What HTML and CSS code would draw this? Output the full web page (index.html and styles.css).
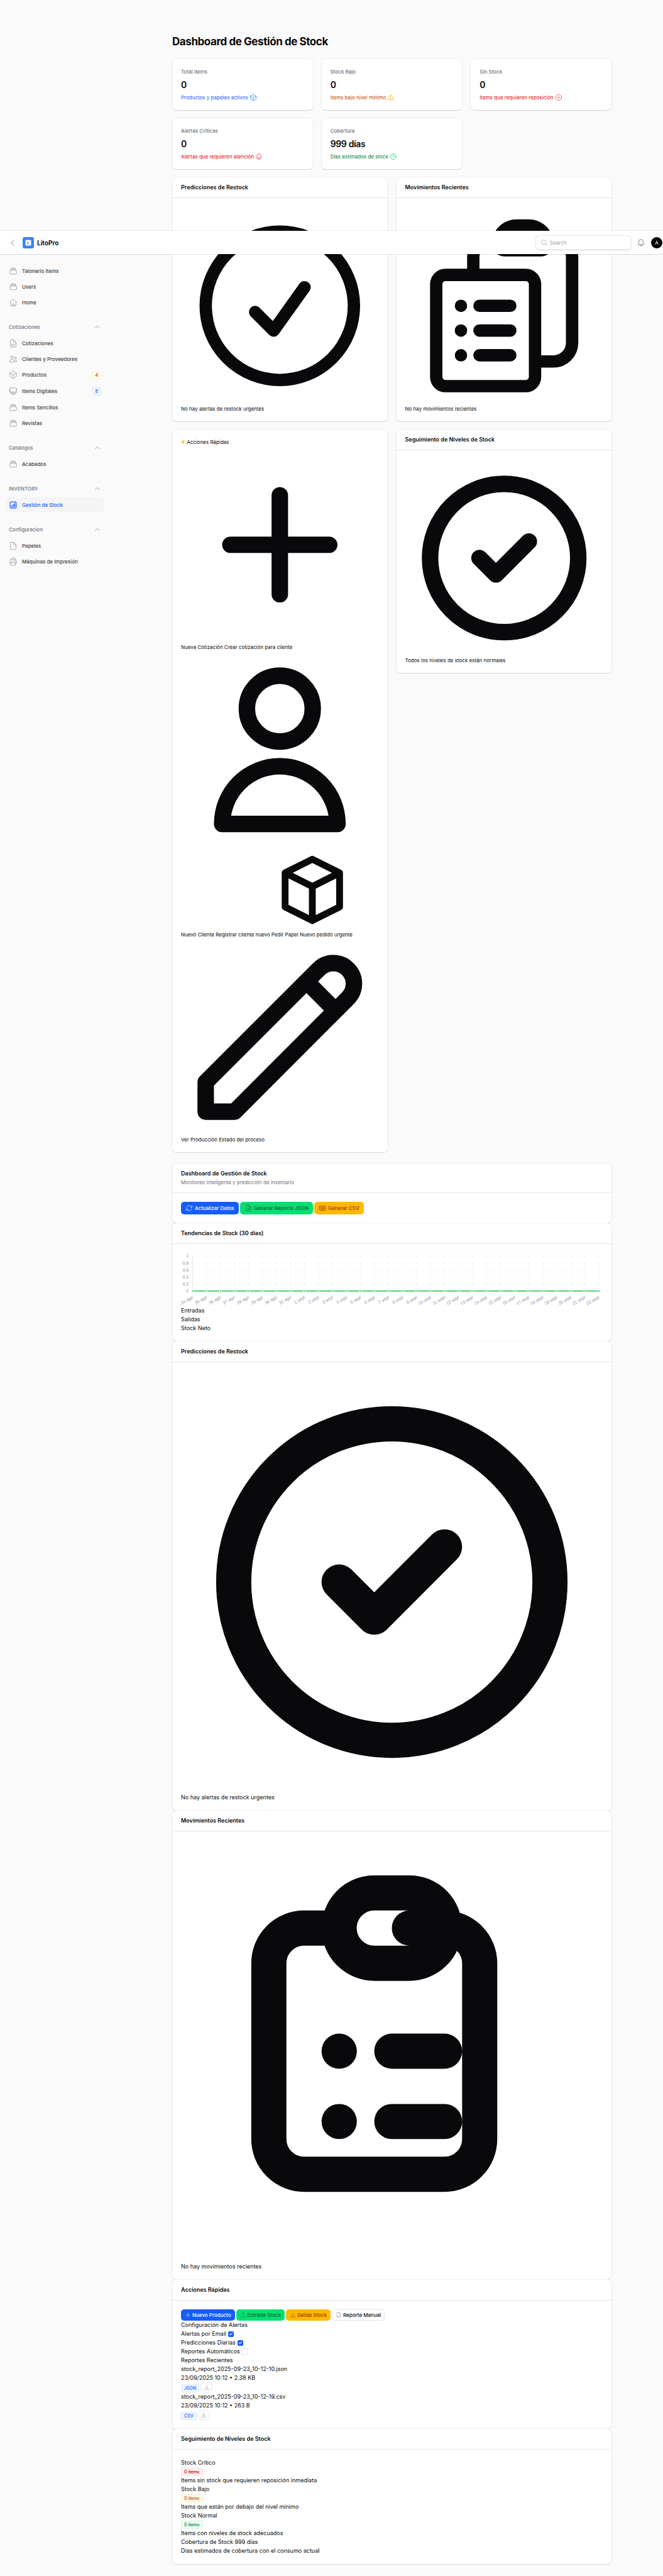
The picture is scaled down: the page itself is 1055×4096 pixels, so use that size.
FILE: index.html
```html
<!DOCTYPE html>
<html lang="es">
<head>
<meta charset="utf-8">
<meta name="viewport" content="width=device-width, initial-scale=1">
<title>Dashboard de Gestión de Stock - LitoPro</title>
<link rel="stylesheet" href="styles.css">
</head>
<body>
<svg class="sprite" aria-hidden="true">
  <symbol id="stack" viewBox="0 0 24 24"><path d="M6 6.878V6a2.25 2.25 0 0 1 2.25-2.25h7.5A2.25 2.25 0 0 1 18 6v.878m-12 0c.235-.083.487-.128.75-.128h10.5c.263 0 .515.045.75.128m-12 0A2.25 2.25 0 0 0 4.5 9v.878m13.5-3A2.25 2.25 0 0 1 19.5 9v.878m0 0a2.246 2.246 0 0 0-.75-.128H5.25c-.263 0-.515.045-.75.128m15 0A2.25 2.25 0 0 1 21 12v6a2.25 2.25 0 0 1-2.25 2.25H5.25A2.25 2.25 0 0 1 3 18v-6c0-.98.626-1.813 1.5-2.122"/></symbol>
  <symbol id="home" viewBox="0 0 24 24"><path d="m2.25 12 8.954-8.955c.44-.439 1.152-.439 1.591 0L21.75 12M4.5 9.75v10.125c0 .621.504 1.125 1.125 1.125H9.75v-4.875c0-.621.504-1.125 1.125-1.125h2.25c.621 0 1.125.504 1.125 1.125V21h4.125c.621 0 1.125-.504 1.125-1.125V9.75M8.25 21h8.25"/></symbol>
  <symbol id="doc-text" viewBox="0 0 24 24"><path d="M19.5 14.25v-2.625a3.375 3.375 0 0 0-3.375-3.375h-1.5A1.125 1.125 0 0 1 13.5 7.125v-1.5a3.375 3.375 0 0 0-3.375-3.375H8.25m0 12.75h7.5m-7.5 3H12M10.5 2.25H5.625c-.621 0-1.125.504-1.125 1.125v17.25c0 .621.504 1.125 1.125 1.125h12.75c.621 0 1.125-.504 1.125-1.125V11.25a9 9 0 0 0-9-9Z"/></symbol>
  <symbol id="doc" viewBox="0 0 24 24"><path d="M19.5 14.25v-2.625a3.375 3.375 0 0 0-3.375-3.375h-1.5A1.125 1.125 0 0 1 13.5 7.125v-1.5a3.375 3.375 0 0 0-3.375-3.375H8.25m2.25 0H5.625c-.621 0-1.125.504-1.125 1.125v17.25c0 .621.504 1.125 1.125 1.125h12.75c.621 0 1.125-.504 1.125-1.125V11.25a9 9 0 0 0-9-9Z"/></symbol>
  <symbol id="doc-down" viewBox="0 0 24 24"><path d="M19.5 14.25v-2.625a3.375 3.375 0 0 0-3.375-3.375h-1.5A1.125 1.125 0 0 1 13.5 7.125v-1.5a3.375 3.375 0 0 0-3.375-3.375H8.25m.75 12 3 3m0 0 3-3m-3 3v-6m-1.5-9H5.625c-.621 0-1.125.504-1.125 1.125v17.25c0 .621.504 1.125 1.125 1.125h12.75c.621 0 1.125-.504 1.125-1.125V11.25a9 9 0 0 0-9-9Z"/></symbol>
  <symbol id="users" viewBox="0 0 24 24"><path d="M15 19.128a9.38 9.38 0 0 0 2.625.372 9.337 9.337 0 0 0 4.121-.952 4.125 4.125 0 0 0-7.533-2.493M15 19.128v-.003c0-1.113-.285-2.16-.786-3.07M15 19.128v.106A12.318 12.318 0 0 1 8.624 21c-2.331 0-4.512-.645-6.374-1.766l-.001-.109a6.375 6.375 0 0 1 11.964-3.07M12 6.375a3.375 3.375 0 1 1-6.75 0 3.375 3.375 0 0 1 6.75 0Zm8.25 2.25a2.625 2.625 0 1 1-5.25 0 2.625 2.625 0 0 1 5.25 0Z"/></symbol>
  <symbol id="cube" viewBox="0 0 24 24"><path d="m21 7.5-9-5.25L3 7.5m18 0-9 5.25m9-5.25v9l-9 5.25M3 7.5l9 5.25M3 7.5v9l9 5.25m0-9v9"/></symbol>
  <symbol id="desktop" viewBox="0 0 24 24"><path d="M9 17.25v1.007a3 3 0 0 1-.879 2.122L7.5 21h9l-.621-.621A3 3 0 0 1 15 18.257V17.25m6-12V15a2.25 2.25 0 0 1-2.25 2.25H5.25A2.25 2.25 0 0 1 3 15V5.25m18 0A2.25 2.25 0 0 0 18.75 3H5.25A2.25 2.25 0 0 0 3 5.25m18 0V12a2.25 2.25 0 0 1-2.25 2.25H5.25A2.25 2.25 0 0 1 3 12V5.25"/></symbol>
  <symbol id="chart-square" viewBox="0 0 24 24"><path d="M7.5 14.25v2.25m3-4.5v4.5m3-6.75v6.75m3-9v9M6 20.25h12A2.25 2.25 0 0 0 20.25 18V6A2.25 2.25 0 0 0 18 3.75H6A2.25 2.25 0 0 0 3.75 6v12A2.25 2.25 0 0 0 6 20.25Z"/></symbol>
  <symbol id="printer" viewBox="0 0 24 24"><path d="M6.72 13.829c-.24.03-.48.062-.72.096m.72-.096a42.415 42.415 0 0 1 10.56 0m-10.56 0L6.34 18m10.94-4.171c.24.03.48.062.72.096m-.72-.096L17.66 18m0 0 .229 2.523a1.125 1.125 0 0 1-1.12 1.227H7.231c-.662 0-1.18-.568-1.12-1.227L6.34 18m11.318 0h1.091A2.25 2.25 0 0 0 21 15.75V9.456c0-1.081-.768-2.015-1.837-2.175a48.055 48.055 0 0 0-1.913-.247M6.34 18H5.25A2.25 2.25 0 0 1 3 15.75V9.456c0-1.081.768-2.015 1.837-2.175a48.041 48.041 0 0 1 1.913-.247m10.5 0a48.536 48.536 0 0 0-10.5 0m10.5 0V3.375c0-.621-.504-1.125-1.125-1.125h-8.25c-.621 0-1.125.504-1.125 1.125v3.659M18 10.5h.008v.008H18V10.5Zm-3 0h.008v.008H15V10.5Z"/></symbol>
  <symbol id="bell" viewBox="0 0 24 24"><path d="M14.857 17.082a23.848 23.848 0 0 0 5.454-1.31A8.967 8.967 0 0 1 18 9.75V9A6 6 0 0 0 6 9v.75a8.967 8.967 0 0 1-2.312 6.022c1.733.64 3.56 1.085 5.455 1.31m5.714 0a24.255 24.255 0 0 1-5.714 0m5.714 0a3 3 0 1 1-5.714 0"/></symbol>
  <symbol id="warning" viewBox="0 0 24 24"><path d="M12 9v3.75m-9.303 3.376c-.866 1.5.217 3.374 1.948 3.374h14.71c1.73 0 2.813-1.874 1.948-3.374L13.949 3.378c-.866-1.5-3.032-1.5-3.898 0L2.697 16.126ZM12 15.75h.007v.008H12v-.008Z"/></symbol>
  <symbol id="x-circle" viewBox="0 0 24 24"><path d="m9.75 9.75 4.5 4.5m0-4.5-4.5 4.5M21 12a9 9 0 1 1-18 0 9 9 0 0 1 18 0Z"/></symbol>
  <symbol id="clock" viewBox="0 0 24 24"><path d="M12 6v6h4.5m4.5 0a9 9 0 1 1-18 0 9 9 0 0 1 18 0Z"/></symbol>
  <symbol id="refresh" viewBox="0 0 24 24"><path d="M16.023 9.348h4.992v-.001M2.985 19.644v-4.992m0 0h4.992m-4.993 0 3.181 3.183a8.25 8.25 0 0 0 13.803-3.7M4.031 9.865a8.25 8.25 0 0 1 13.803-3.7l3.181 3.182m0-4.991v4.99"/></symbol>
  <symbol id="table" viewBox="0 0 24 24"><path d="M3.4 4.5h17.2a1.1 1.1 0 0 1 1.1 1.1v12.8a1.1 1.1 0 0 1-1.1 1.1H3.400a1.100 1.100 0 0 1-1.100-1.100V5.600a1.100 1.100 0 0 1 1.100-1.100ZM2.300 8.250h19.400M2.300 12h19.400M2.300 15.750h19.400M12 8.250V19.500"/></symbol>
  <symbol id="tray-up" viewBox="0 0 24 24"><path d="M3 16.500v2.250A2.250 2.250 0 0 0 5.250 21h13.500A2.250 2.250 0 0 0 21 18.750V16.500m-13.500-9L12 3m0 0 4.500 4.500M12 3v13.500"/></symbol>
  <symbol id="tray-down" viewBox="0 0 24 24"><path d="M3 16.500v2.250A2.250 2.250 0 0 0 5.250 21h13.500A2.250 2.250 0 0 0 21 18.750V16.500M16.500 12 12 16.500m0 0L7.500 12m4.500 4.500V3"/></symbol>
  <symbol id="search" viewBox="0 0 24 24"><path d="m21 21-5.197-5.197m0 0A7.500 7.500 0 1 0 5.196 5.196a7.500 7.500 0 0 0 10.607 10.607Z"/></symbol>
  <symbol id="plus" viewBox="0 0 24 24"><path d="M12 4.500v15m7.500-7.500h-15"/></symbol>
  <symbol id="chevron-left" viewBox="0 0 24 24"><path d="M15.750 19.500 8.250 12l7.500-7.500"/></symbol>
  <symbol id="chevron-up" viewBox="0 0 24 24"><path d="m5 15.500 7-7 7 7"/></symbol>
</svg>

<header class="topbar">
  <button class="icon-button" type="button" aria-label="Contraer menú"><svg class="icon icon-lg"><use href="#chevron-left"/></svg></button>
  <a class="brand" href="#">
    <svg class="brand-logo" viewBox="0 0 32 32"><rect width="32" height="32" rx="6" fill="#3b82f6"/><rect x="8" y="8" width="16" height="16" rx="2" fill="#fff"/><path d="M13 15v5M16 12.500v7.500M19 18v2" stroke="#3b82f6" stroke-width="1.600"/></svg>
    <span>LitoPro</span>
  </a>
  <label class="search"><svg class="icon icon-md"><use href="#search"/></svg><input type="search" placeholder="Search" aria-label="Search"></label>
  <button class="icon-button" type="button" aria-label="Notificaciones"><svg class="icon icon-lg"><use href="#bell"/></svg></button>
  <button class="avatar" type="button">A</button>
</header>

<div class="layout">
  <aside class="sidebar">
    <nav class="nav">
      <div class="nav-group">
        <a class="nav-item" href="#"><svg class="icon icon-lg"><use href="#stack"/></svg>Talonario Items</a>
        <a class="nav-item" href="#"><svg class="icon icon-lg"><use href="#stack"/></svg>Users</a>
        <a class="nav-item" href="#"><svg class="icon icon-lg"><use href="#home"/></svg>Home</a>
      </div>
      <div class="nav-group">
        <button class="nav-head" type="button">Cotizaciones<svg class="icon icon-md"><use href="#chevron-up"/></svg></button>
        <a class="nav-item" href="#"><svg class="icon icon-lg"><use href="#doc-text"/></svg>Cotizaciones</a>
        <a class="nav-item" href="#"><svg class="icon icon-lg"><use href="#users"/></svg>Clientes y Proveedores</a>
        <a class="nav-item has-badge" href="#"><svg class="icon icon-lg"><use href="#cube"/></svg>Productos<span class="badge badge-warning">4</span></a>
        <a class="nav-item has-badge" href="#"><svg class="icon icon-lg"><use href="#desktop"/></svg>Items Digitales<span class="badge badge-info">8</span></a>
        <a class="nav-item" href="#"><svg class="icon icon-lg"><use href="#stack"/></svg>Items Sencillos</a>
        <a class="nav-item" href="#"><svg class="icon icon-lg"><use href="#stack"/></svg>Revistas</a>
      </div>
      <div class="nav-group">
        <button class="nav-head" type="button">Catalogos<svg class="icon icon-md"><use href="#chevron-up"/></svg></button>
        <a class="nav-item" href="#"><svg class="icon icon-lg"><use href="#stack"/></svg>Acabados</a>
      </div>
      <div class="nav-group">
        <button class="nav-head" type="button">INVENTORY<svg class="icon icon-md"><use href="#chevron-up"/></svg></button>
        <a class="nav-item active" href="#" aria-current="page"><svg class="icon icon-lg"><use href="#chart-square"/></svg>Gestión de Stock</a>
      </div>
      <div class="nav-group">
        <button class="nav-head" type="button">Configuracion<svg class="icon icon-md"><use href="#chevron-up"/></svg></button>
        <a class="nav-item" href="#"><svg class="icon icon-lg"><use href="#doc"/></svg>Papeles</a>
        <a class="nav-item" href="#"><svg class="icon icon-lg"><use href="#printer"/></svg>Máquinas de Impresión</a>
      </div>
    </nav>
  </aside>

  <main class="main">
    <div class="content">
      <h1 class="page-title">Dashboard de Gestión de Stock</h1>

      <section class="stats">
        <article class="card stat"><span class="stat-label">Total Items</span><strong class="stat-value">0</strong><span class="stat-note blue">Productos y papeles activos <svg class="icon icon-md"><use href="#cube"/></svg></span></article>
        <article class="card stat"><span class="stat-label">Stock Bajo</span><strong class="stat-value">0</strong><span class="stat-note amber">Items bajo nivel mínimo <svg class="icon icon-md"><use href="#warning"/></svg></span></article>
        <article class="card stat"><span class="stat-label">Sin Stock</span><strong class="stat-value">0</strong><span class="stat-note red">Items que requieren reposición <svg class="icon icon-md"><use href="#x-circle"/></svg></span></article>
        <article class="card stat"><span class="stat-label">Alertas Críticas</span><strong class="stat-value">0</strong><span class="stat-note red">Alertas que requieren atención <svg class="icon icon-md"><use href="#bell"/></svg></span></article>
        <article class="card stat"><span class="stat-label">Cobertura</span><strong class="stat-value">999 días</strong><span class="stat-note green">Días estimados de stock <svg class="icon icon-md"><use href="#clock"/></svg></span></article>
      </section>

      <section class="widgets">
        <article class="card">
          <header class="card-head"><h2>Predicciones de Restock</h2></header>
          <div class="card-body small">
            <svg class="art" viewBox="0 0 24 24" stroke-width="1.500"><path d="M9 12.750 11.250 15 15 9.750M21 12a9 9 0 1 1-18 0 9 9 0 0 1 18 0Z"/></svg>
            <p>No hay alertas de restock urgentes</p>
          </div>
        </article>
        <article class="card">
          <header class="card-head"><h2>Movimientos Recientes</h2></header>
          <div class="card-body small">
            <svg class="art" viewBox="0 0 24 24" stroke-width="1.500"><path d="M9 12h3.750M9 15h3.750M9 18h3.750m3 .75H18a2.250 2.250 0 0 0 2.250-2.250V6.108c0-1.135-.845-2.098-1.976-2.192a48.424 48.424 0 0 0-1.123-.08m-5.801 0c-.065.21-.1.433-.1.664 0 .414.336.75.75.75h4.500a.75.75 0 0 0 .75-.75 2.250 2.250 0 0 0-.1-.664m-5.800 0A2.251 2.251 0 0 1 13.500 2.250H15c1.012 0 1.867.668 2.150 1.586m-5.800 0c-.376.023-.75.05-1.124.08C9.095 4.010 8.250 4.973 8.250 6.108V8.250m0 0H4.875c-.621 0-1.125.504-1.125 1.125v11.250c0 .621.504 1.125 1.125 1.125h9.750c.621 0 1.125-.504 1.125-1.125V9.375c0-.621-.504-1.125-1.125-1.125H8.250ZM6.750 12h.008v.008H6.750V12Zm0 3h.008v.008H6.750V15Zm0 3h.008v.008H6.750V18Z"/></svg>
            <p>No hay movimientos recientes</p>
          </div>
        </article>
        <article class="card">
          <div class="card-body small">
            <p><svg class="bolt" viewBox="0 0 16 24"><path d="M10 1 1 14h5l-2 9 11-14H9l3-8Z" fill="#fdc228"/></svg> Acciones Rápidas</p>
            <svg class="art" viewBox="0 0 24 24" stroke-width="2"><path d="M12 6v6m0 0v6m0-6h6m-6 0H6"/></svg>
            <p>Nueva Cotización Crear cotización para cliente</p>
            <svg class="art" viewBox="0 0 24 24" stroke-width="2"><path d="M16 7a4 4 0 1 1-8 0 4 4 0 0 1 8 0zM12 14a7 7 0 0 0-7 7h14a7 7 0 0 0-7-7z"/></svg>
            <div class="pair">
              <p>Nuevo Cliente Registrar cliente nuevo</p>
              <div class="pair-art">
                <svg class="art" viewBox="0 0 24 24" stroke-width="2"><path d="M20 7l-8-4-8 4m16 0l-8 4m8-4v10l-8 4m0-10L4 7m8 4v10M4 7v10l8 4"/></svg>
                <p>Pedir Papel Nuevo pedido urgente</p>
              </div>
            </div>
            <svg class="art" viewBox="0 0 24 24" stroke-width="2"><path d="M15.232 5.232l3.536 3.536m-2.036-5.036a2.500 2.500 0 1 1 3.536 3.536L6.500 21.036H3v-3.572L16.732 3.732z"/></svg>
            <p>Ver Producción Estado del proceso</p>
          </div>
        </article>
        <article class="card">
          <header class="card-head"><h2>Seguimiento de Niveles de Stock</h2></header>
          <div class="card-body small">
            <svg class="art" viewBox="0 0 24 24" stroke-width="2"><path d="M9 12l2 2 4-4m6 2a9 9 0 1 1-18 0 9 9 0 0 1 18 0z"/></svg>
            <p>Todos los niveles de stock están normales</p>
          </div>
        </article>
      </section>

      <div class="panels">
        <section class="card">
          <header class="card-head"><h2>Dashboard de Gestión de Stock</h2><p class="card-sub">Monitoreo inteligente y predicción de inventario</p></header>
          <div class="card-body">
            <div class="buttons">
              <button class="btn btn-primary" type="button"><svg class="icon icon-md"><use href="#refresh"/></svg>Actualizar Datos</button>
              <button class="btn btn-success" type="button"><svg class="icon icon-md"><use href="#doc-down"/></svg>Generar Reporte JSON</button>
              <button class="btn btn-warning" type="button"><svg class="icon icon-md"><use href="#table"/></svg>Generar CSV</button>
            </div>
          </div>
        </section>

        <section class="card">
          <header class="card-head"><h2>Tendencias de Stock (30 días)</h2></header>
          <div class="card-body">
            <svg class="chart" id="stock-chart" viewBox="0 0 1168 148" role="img" aria-label="Tendencias de Stock"></svg>
            <p>Entradas</p>
            <p>Salidas</p>
            <p>Stock Neto</p>
          </div>
        </section>

        <section class="card">
          <header class="card-head"><h2>Predicciones de Restock</h2></header>
          <div class="card-body">
            <svg class="art" viewBox="0 0 24 24" stroke-width="2"><path d="M9 12l2 2 4-4m6 2a9 9 0 1 1-18 0 9 9 0 0 1 18 0z"/></svg>
            <p>No hay alertas de restock urgentes</p>
          </div>
        </section>

        <section class="card">
          <header class="card-head"><h2>Movimientos Recientes</h2></header>
          <div class="card-body">
            <svg class="art" viewBox="0 0 24 24" stroke-width="2"><path d="M9 5H7a2 2 0 0 0-2 2v10a2 2 0 0 0 2 2h8a2 2 0 0 0 2-2V7a2 2 0 0 0-2-2h-2M9 5a2 2 0 0 0 2 2h2a2 2 0 0 0 2-2M9 5a2 2 0 0 1 2-2h2a2 2 0 0 1 2 2m-3 7h3m-3 4h3m-6-4h.01M9 16h.01"/></svg>
            <p>No hay movimientos recientes</p>
          </div>
        </section>

        <section class="card">
          <header class="card-head"><h2>Acciones Rápidas</h2></header>
          <div class="card-body">
            <div class="buttons">
              <button class="btn btn-sm btn-primary" type="button"><svg class="icon icon-sm"><use href="#plus"/></svg>Nuevo Producto</button>
              <button class="btn btn-sm btn-success" type="button"><svg class="icon icon-sm"><use href="#tray-up"/></svg>Entrada Stock</button>
              <button class="btn btn-sm btn-warning" type="button"><svg class="icon icon-sm"><use href="#tray-down"/></svg>Salida Stock</button>
              <button class="btn btn-sm btn-plain" type="button"><svg class="icon icon-sm"><use href="#doc-text"/></svg>Reporte Manual</button>
            </div>
            <p>Configuración de Alertas</p>
            <label class="check">Alertas por Email <input type="checkbox" checked></label>
            <label class="check">Predicciones Diarias <input type="checkbox" checked></label>
            <label class="check">Reportes Automáticos <input type="checkbox"></label>
            <p>Reportes Recientes</p>
            <p>stock_report_2025-09-23_10-12-10.json</p>
            <p>23/09/2025 10:12 • 2.38 KB</p>
            <div class="file-row"><span class="badge badge-info">JSON</span><button class="btn-download btn-plain" type="button" aria-label="Descargar JSON"><svg class="icon icon-sm"><use href="#tray-down"/></svg></button></div>
            <p>stock_report_2025-09-23_10-12-19.csv</p>
            <p>23/09/2025 10:12 • 263 B</p>
            <div class="file-row"><span class="badge badge-info">CSV</span><button class="btn-download btn-plain" type="button" aria-label="Descargar CSV"><svg class="icon icon-sm"><use href="#tray-down"/></svg></button></div>
          </div>
        </section>

        <section class="card">
          <header class="card-head"><h2>Seguimiento de Niveles de Stock</h2></header>
          <div class="card-body">
            <p>Stock Crítico</p>
            <div class="badge-row"><span class="badge badge-danger">0 items</span></div>
            <p>Items sin stock que requieren reposición inmediata</p>
            <p>Stock Bajo</p>
            <div class="badge-row"><span class="badge badge-warning">0 items</span></div>
            <p>Items que están por debajo del nivel mínimo</p>
            <p>Stock Normal</p>
            <div class="badge-row"><span class="badge badge-success">0 items</span></div>
            <p>Items con niveles de stock adecuados</p>
            <p>Cobertura de Stock 999 días</p>
            <p>Días estimados de cobertura con el consumo actual</p>
          </div>
        </section>
      </div>
    </div>
  </main>
</div>
<script src="chart.js"></script>
</body>
</html>
```
FILE: styles.css
```css
*, *::before, *::after { box-sizing: border-box; }

body {
  margin: 0;
  position: relative;
  background: #fafafa;
  color: #09090b;
  font-family: Inter, "Liberation Sans", sans-serif;
  font-size: 9px;
  line-height: 14px;
}

h1, h2, p { margin: 0; }
a { color: inherit; text-decoration: none; }
button, input { font: inherit; color: inherit; }
button { border: 0; padding: 0; background: none; cursor: pointer; }

.sprite { display: none; }

.icon {
  flex: none;
  fill: none;
  stroke: currentColor;
  stroke-width: 1.5;
  stroke-linecap: round;
  stroke-linejoin: round;
}
.icon-sm { width: 10px; height: 10px; }
.icon-md { width: 12px; height: 12px; }
.icon-lg { width: 14px; height: 14px; }

/* Top bar floats over the page content */
.topbar {
  position: absolute;
  top: 367px;
  left: 0;
  right: 0;
  z-index: 10;
  display: flex;
  align-items: center;
  gap: 9px;
  height: 37px;
  padding: 0 1px 0 13px;
  background: #fff;
  box-shadow: 0 0 0 1px rgba(9, 9, 11, .05), 0 1px 1px rgba(9, 9, 11, .08);
}
.icon-button { display: flex; color: #71717b; }
.brand {
  display: flex;
  align-items: center;
  gap: 5px;
  margin-right: auto;
  color: #0f172a;
  font-size: 10px;
  font-weight: 700;
}
.brand-logo { width: 18px; height: 18px; }
.search {
  display: flex;
  align-items: center;
  gap: 3px;
  width: 151px;
  height: 22px;
  padding: 0 7px;
  border-radius: 5px;
  background: #fff;
  color: #9f9fa9;
  box-shadow: 0 0 0 1px rgba(9, 9, 11, .1), 0 1px 1px rgba(9, 9, 11, .1);
}
.search input {
  flex: 1;
  min-width: 0;
  border: 0;
  padding: 0;
  outline: 0;
  background: none;
  appearance: none;
  font-size: 8px;
}
.search input::placeholder { color: #9f9fa9; }
.avatar {
  width: 18px;
  height: 18px;
  border-radius: 50%;
  background: #000;
  color: #fff;
  font-size: 8px;
}

.layout { display: flex; }
.sidebar { flex: 0 0 192px; padding: 419px 26px 0 9px; }
.nav { display: flex; flex-direction: column; gap: 16px; }
.nav-group { display: flex; flex-direction: column; gap: 2px; }
.nav-head, .nav-item {
  display: flex;
  align-items: center;
  height: 23px;
  padding: 0 5px;
  font-size: 8px;
  font-weight: 500;
}
.nav-head { justify-content: space-between; height: 24px; color: #71717b; }
.nav-head .icon { color: #9f9fa9; stroke-width: 2; }
.nav-item { gap: 7px; border-radius: 5px; color: #3f3f46; }
.nav-item.has-badge { height: 24px; }
.nav-item .icon { color: #9f9fa9; }
.nav-item .badge { margin-left: auto; }
.nav-item.active { background: #f4f4f5; color: #155dfc; }
.nav-item.active .icon { color: #155dfc; stroke-width: 2; }

.badge {
  display: inline-flex;
  align-items: center;
  justify-content: center;
  min-width: 14px;
  height: 13px;
  padding: 0 5px;
  border-radius: 3px;
  font-size: 7px;
  font-weight: 500;
  line-height: 13px;
}
.badge-warning { background: #fffbeb; color: #bb4d00; box-shadow: inset 0 0 0 1px #fdeecb; }
.badge-info { background: #eff6ff; color: #155dfc; box-shadow: inset 0 0 0 1px #d8e6fe; }
.badge-danger { background: #fef2f2; color: #c10007; box-shadow: inset 0 0 0 1px #fbd9da; }
.badge-success { background: #f0fdf4; color: #008236; box-shadow: inset 0 0 0 1px #d3f3de; }

.main { flex: 1; min-width: 0; padding: 56px 14px 18px; }
.content { max-width: 699px; margin: 0 auto; }
.page-title {
  margin-bottom: 18px;
  font-size: 17px;
  font-weight: 700;
  line-height: 20px;
  letter-spacing: -0.025em;
}

.card {
  border-radius: 7px;
  background: #fff;
  box-shadow: 0 0 0 1px rgba(9, 9, 11, .05), 0 1px 1px rgba(9, 9, 11, .1);
}
.card-head { padding: 9px 14px; border-bottom: 1px solid #e4e4e7; }
.card-head h2 { font-size: 9px; font-weight: 600; line-height: 14px; }
.card-sub { color: #71717b; font-size: 8px; }
.card-body { padding: 14px; }
.card-body.small { font-size: 8px; line-height: 12px; }

.stats { display: grid; grid-template-columns: repeat(3, 1fr); gap: 13px 14px; }
.stat { display: flex; flex-direction: column; gap: 4px; padding: 14px; font-size: 8px; line-height: 12px; }
.stat-label { color: #71717b; font-weight: 500; }
.stat-value { font-size: 14px; font-weight: 600; line-height: 21px; letter-spacing: -0.025em; }
.stat-note { display: flex; align-items: center; gap: 2px; }
.blue { color: #155dfc; }
.blue .icon { color: #2b7fff; }
.amber { color: #bb4d00; }
.amber .icon { color: #fe9a00; }
.red { color: #e7000b; }
.red .icon { color: #fb2c36; }
.green { color: #008236; }
.green .icon { color: #00c950; }

.widgets {
  display: grid;
  grid-template-columns: repeat(2, 1fr);
  gap: 13px 14px;
  align-items: start;
  margin-top: 13px;
}
.art {
  display: block;
  width: 100%;
  fill: none;
  stroke: #09090b;
  stroke-linecap: round;
  stroke-linejoin: round;
}
.bolt { width: 7px; height: 10px; vertical-align: -2px; }
.pair { display: flex; align-items: flex-end; gap: 2px; white-space: nowrap; }
.pair-art { width: 130px; }

.panels { margin-top: 18px; }
.buttons { display: flex; flex-wrap: wrap; gap: 2px; }
.btn {
  display: flex;
  align-items: center;
  gap: 3px;
  height: 20px;
  padding: 0 7px;
  border-radius: 5px;
  font-size: 8px;
  font-weight: 500;
  line-height: 12px;
}
.btn-sm { gap: 2px; height: 18px; padding: 0 6px; }
.btn-primary { background: #155dfc; color: #fff; }
.btn-success { background: #05df72; color: #016630; }
.btn-warning { background: #ffb900; color: #973c00; }
.btn-primary .icon, .btn-success .icon, .btn-warning .icon { opacity: .85; }
.btn-plain { background: #fff; box-shadow: inset 0 0 0 1px #e4e4e7; }
.btn-plain .icon { color: #9f9fa9; }
.chart { display: block; width: 100%; }
.chart .grid { stroke: #f1f1f2; }
.chart .axis { stroke: #d4d4d8; }
.chart text { fill: #9093a0; font-family: "Liberation Sans", Arial, sans-serif; font-size: 12px; }
.chart .line { stroke: #22c55e; stroke-width: 2; }
.chart .line-area { stroke: #a7e8c0; stroke-width: 4; }
.chart .dot { fill: #22c55e; stroke: #fff; stroke-width: 2; }

.check { display: flex; align-items: center; gap: 3px; height: 14px; }
.check input {
  position: relative;
  width: 9px;
  height: 9px;
  margin: 0;
  border-radius: 2px;
  appearance: none;
  background: #fff;
  box-shadow: 0 0 0 1px #e0e0e3;
}
.check input:checked { background: #155dfc; box-shadow: none; }
.check input:checked::after {
  content: "";
  position: absolute;
  top: 1px;
  left: 3px;
  width: 3px;
  height: 5px;
  border: solid #fff;
  border-width: 0 1px 1px 0;
  transform: rotate(45deg);
}
.file-row { display: flex; align-items: flex-end; gap: 2px; height: 16px; }
.btn-download {
  display: flex;
  align-items: center;
  justify-content: center;
  width: 19px;
  height: 16px;
  border-radius: 5px;
}
.badge-row { display: flex; align-items: center; height: 14px; }
```
FILE: chart.js
```js
// Draws the 30-day stock trend: grid, axis labels and a flat series at zero.
(function () {
  var svg = document.getElementById('stock-chart');
  var left = 32, right = 1158, top = 9, bottom = 106, tick = 8;
  var labels = [];
  for (var d = 24; d <= 31; d++) labels.push(d + ' ago');
  for (d = 1; d <= 22; d++) labels.push(d + ' sept');
  var step = (right - left) / (labels.length - 1);

  function add(name, attrs, text) {
    var el = document.createElementNS('http://www.w3.org/2000/svg', name);
    Object.keys(attrs).forEach(function (key) { el.setAttribute(key, attrs[key]); });
    if (text) el.textContent = text;
    svg.appendChild(el);
  }

  ['1', '0,8', '0,6', '0,4', '0,2', '0'].forEach(function (label, i) {
    var y = top + i * (bottom - top) / 5;
    add('line', { 'class': 'grid', x1: left - tick, x2: right, y1: y, y2: y });
    add('text', { x: left - 11, y: y + 4, 'text-anchor': 'end' }, label);
  });

  labels.forEach(function (label, i) {
    var x = left + i * step;
    add('line', { 'class': i ? 'grid' : 'axis', x1: x, x2: x, y1: top, y2: i ? bottom + tick : bottom });
    add('text', { y: 4, 'text-anchor': 'end', transform: 'translate(' + x + ' 122) rotate(-30)' }, label);
  });

  add('line', { 'class': 'line-area', x1: left, x2: right, y1: bottom, y2: bottom });
  add('line', { 'class': 'line', x1: left, x2: right, y1: bottom, y2: bottom });
  labels.forEach(function (label, i) {
    add('circle', { 'class': 'dot', cx: left + i * step, cy: bottom, r: 3 });
  });
})();
```
